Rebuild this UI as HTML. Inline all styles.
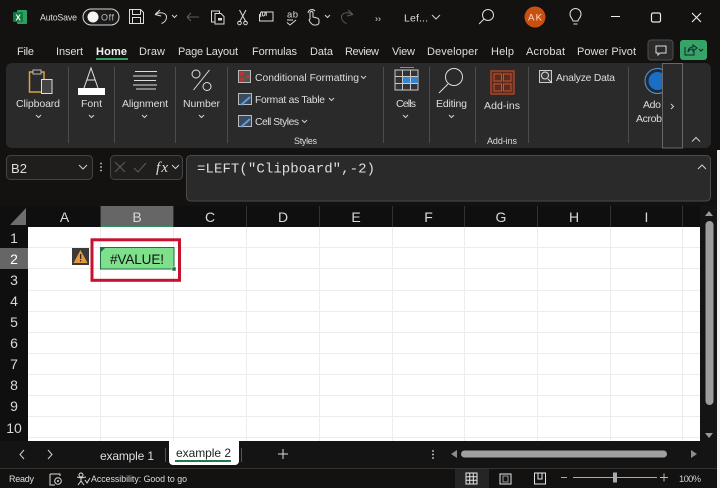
<!DOCTYPE html>
<html><head><meta charset="utf-8"><style>
html,body{margin:0;padding:0;background:#131211;width:720px;height:488px;overflow:hidden}
svg{display:block}
text{font-family:"Liberation Sans",sans-serif;fill:#dedede;font-size:10.500px}
.i{fill:none;stroke:#dcdcdc;stroke-width:1}
.c{fill:none;stroke:#d0d0d0;stroke-width:1}
.g{stroke:#e6e6e6;stroke-width:1;fill:none}
.t{font-size:11px}
.h{font-size:14px;fill:#d8d8d8}
.s{font-size:9.300px}
</style></head><body>
<svg width="720" height="488" viewBox="0 0 720 488" xmlns="http://www.w3.org/2000/svg">
<rect width="720" height="488" fill="#131211"/>

<!-- title bar -->
<rect x="17" y="10" width="10" height="14" rx="1" fill="#2f9e62"/>
<rect x="13" y="12" width="10" height="10" rx="1" fill="#107c41"/>
<text x="15.500" y="20.500" style="font-size:8px;font-weight:bold;fill:#fff">X</text>
<text x="40" y="20.500" textLength="37" style="font-size:8.800px">AutoSave</text>
<rect x="83" y="9" width="36" height="16" rx="8" fill="#1a1a1a" stroke="#d8d8d8"/>
<circle cx="93" cy="17" r="5.500" fill="#f4f4f4"/>
<text x="101" y="20.500" textLength="13" style="font-size:9px;fill:#bdbdbd">Off</text>
<g class="i">
<path d="M129.500 9.500h11l3 3v11h-14zM132.500 9.500v5h8v-5M132.500 23.500v-6h8v6"/>
<path d="M155 14.500l5-4.500M155 14.500l6 1.500M155.500 14.500c4-3 11-2 11 2.500 0 3-2 5.500-5 6.500"/>
</g>
<path class="c" d="M172 15l2.500 2.500 2.500-2.500"/>
<path d="M187 17h12M187 17l4-4M187 17l4 4" fill="none" stroke="#5e5e5e" stroke-width="1"/>
<g class="i">
<path d="M215 22h-3.500v-11h8v2.500M215 13.500h6l3 3v7.500h-9z"/><rect x="218" y="18" width="4" height="2.500" fill="#ddd" stroke="none"/>
<path d="M239.500 10l6.500 12M246 10l-6.500 12"/><circle cx="239.500" cy="23" r="1.800"/><circle cx="245.500" cy="23" r="1.800"/>
<path d="M262 12h11v9h-13.500v-7M261 17c-1.500-3 0-6 1-5s-.5 4 1.500 4 1-4 2-4 1 3 .5 4"/>
<path d="M287 22.500l3 2.500 6-5M287 20l6 0" stroke="#dcdcdc"/>
<path d="M310 19v-6a1.500 1.500 0 0 1 3 0v4l4 1c1 0 2 1 2 2v2c0 2-1 3-3 3h-2c-2 0-3-2-4-3l-1-2zM308 13a4 4 0 0 1 7-2"/>
</g>
<text x="287" y="17.500" textLength="11" style="font-size:9.500px">ab</text>
<path class="c" d="M325 15l2.500 2.500 2.500-2.500"/>
<path d="M353 14.500l-5-4.500M353 14.500l-6 1.500M352.500 14.500c-4-3-11-2-11 2.500 0 3 2 5.500 5 6.500" fill="none" stroke="#5a5a5a"/>
<text x="375" y="21.500" style="font-size:9px;fill:#ddd">››</text>
<text x="404" y="21.500" textLength="24" style="font-size:10.500px">Lef...</text>
<path class="c" d="M432 15l4 4 4-4"/>
<circle cx="488" cy="15" r="5.500" class="i"/><path class="i" d="M484 19l-5 5"/>
<circle cx="535" cy="17" r="10.500" fill="#ca5010"/>
<text x="528" y="20.500" textLength="14" style="font-size:9.500px;fill:#f6e0d4">AK</text>
<path class="i" d="M573 21c0-2-3-3-3-7a5.500 5.500 0 0 1 11 0c0 4-3 5-3 7zM573.500 24h4"/>
<path d="M611 16.500h9" stroke="#eee" stroke-width="1"/>
<rect x="651.500" y="13" width="9" height="9" rx="1.500" fill="none" stroke="#e6e6e6" stroke-width="1.200"/>
<path d="M692 13l9 9M701 13l-9 9" stroke="#eee" stroke-width="1.100"/>

<!-- tabs -->
<text class="t" x="17" y="55" textLength="17">File</text>
<text class="t" x="56" y="55" textLength="27">Insert</text>
<text x="96" y="55" textLength="31" style="font-size:11px;font-weight:bold;fill:#f2f2f2">Home</text>
<text class="t" x="139" y="55" textLength="26">Draw</text>
<text class="t" x="178" y="55" textLength="60">Page Layout</text>
<text class="t" x="252" y="55" textLength="45">Formulas</text>
<text class="t" x="310" y="55" textLength="23">Data</text>
<text class="t" x="345" y="55" textLength="34">Review</text>
<text class="t" x="392" y="55" textLength="23">View</text>
<text class="t" x="427" y="55" textLength="51">Developer</text>
<text class="t" x="491" y="55" textLength="23">Help</text>
<text class="t" x="526" y="55" textLength="39">Acrobat</text>
<text class="t" x="577" y="55" textLength="59">Power Pivot</text>
<rect x="96" y="58" width="32" height="2" fill="#2f9e62"/>
<rect x="648" y="40" width="25" height="20" rx="3" fill="#2b2b2b" stroke="#4d4d4d"/>
<path class="i" d="M656 46h10v7h-6l-2 2v-2h-2z"/>
<rect x="680" y="40" width="27" height="20" rx="3" fill="#35a466"/>
<path d="M685 47v8h9v-4M688 52c0-3 2-5 5-5v-2l4 3-4 3v-2c-2 0-4 1-5 3z" fill="none" stroke="#123" stroke-width="1"/>
<path d="M699 49l2 2 2-2" fill="none" stroke="#123"/>

<!-- ribbon -->
<rect x="6" y="63" width="705" height="85" rx="6" fill="#2a2a2a"/>
<g stroke="#4c4c4c" stroke-width="1">
<path d="M68.500 67v76M114.500 67v76M175.500 67v76M227.500 67v76M383.500 67v76M429.500 67v76M475.500 67v76M528.500 67v76M628.500 67v76"/>
</g>
<!-- clipboard -->
<path d="M34 72h-4.500v20h12M44 79v-7h-3" fill="none" stroke="#d9a441" stroke-width="1.500"/>
<rect x="33" y="70" width="8" height="4" fill="#2a2a2a" stroke="#bbb"/>
<rect x="41.500" y="79.500" width="10.500" height="14" fill="#444" stroke="#ddd"/>
<text x="16" y="107" textLength="44">Clipboard</text>
<path class="c" d="M36 115l2.500 2.500 2.500-2.500"/>
<!-- font -->
<path d="M84 88l7-20 7 20M86.500 80h9" fill="none" stroke="#e6e6e6"/>
<rect x="78" y="88" width="27" height="7" fill="#fff"/>
<text x="81" y="107" textLength="21">Font</text>
<path class="c" d="M89 115l2.500 2.500 2.500-2.500"/>
<!-- alignment -->
<path d="M135 71.500h22M133 76h24M134 80.500h22M133 85h24M136 89h20" stroke="#ddd"/>
<text x="122" y="107" textLength="46">Alignment</text>
<path class="c" d="M142 115l2.500 2.500 2.500-2.500"/>
<!-- number -->
<path d="M209.500 70l-16 20" stroke="#e0e0e0" fill="none"/>
<circle cx="196" cy="74" r="4" fill="none" stroke="#e0e0e0"/>
<circle cx="207" cy="86.500" r="4" fill="none" stroke="#e0e0e0"/>
<text x="183" y="107" textLength="37">Number</text>
<path class="c" d="M199 115l2.500 2.500 2.500-2.500"/>
<!-- styles -->
<rect x="238.500" y="70.500" width="12" height="12" fill="#555" stroke="#bbb"/>
<rect x="240" y="72" width="4" height="3" fill="#c43030"/><rect x="246" y="75" width="4" height="3" fill="#c43030"/><rect x="240" y="78" width="4" height="3" fill="#c43030"/>
<text x="255" y="81" textLength="104" style="font-size:10.300px">Conditional Formatting</text>
<path class="c" d="M361 76l2.500 2.500 2.500-2.500"/>
<rect x="238.500" y="93.500" width="13" height="11" fill="#3b4a5c" stroke="#bbb"/>
<path d="M241 105l9-8" stroke="#5aa0e0" stroke-width="2"/>
<text x="255" y="103" textLength="70" style="font-size:10.300px">Format as Table</text>
<path class="c" d="M329 98l2.500 2.500 2.500-2.500"/>
<rect x="238.500" y="115.500" width="13" height="11" fill="#3b4a5c" stroke="#bbb"/>
<path d="M241 127l9-8" stroke="#5aa0e0" stroke-width="2"/>
<text x="255" y="125" textLength="44" style="font-size:10.300px">Cell Styles</text>
<path class="c" d="M302 120l2.500 2.500 2.500-2.500"/>
<text x="294" y="144" textLength="23" style="font-size:9px">Styles</text>
<!-- cells -->
<rect x="395" y="70" width="23" height="20" fill="#333" stroke="#c8c8c8"/>
<rect x="402" y="77" width="16" height="7" fill="#2f86d6"/>
<path d="M395 76.500h23M395 83.500h23M402.500 70v20M410.500 70v20" stroke="#c8c8c8" stroke-width="1" fill="none"/>
<path d="M400 67.500h14" stroke="#4a9be0"/>
<text x="396" y="107" textLength="20">Cells</text>
<path class="c" d="M403 115l2.500 2.500 2.500-2.500"/>
<!-- editing -->
<circle cx="454" cy="77" r="8.500" class="i"/>
<path class="i" d="M448 84l-9 9"/>
<text x="436" y="107" textLength="31">Editing</text>
<path class="c" d="M449 115l2.500 2.500 2.500-2.500"/>
<!-- addins -->
<rect x="491" y="71" width="23" height="23" fill="#5c2b1c" stroke="#a8452a" stroke-width="1.500"/>
<rect x="494" y="74" width="7.500" height="7" fill="none" stroke="#c2553a"/><rect x="503.500" y="74" width="7.500" height="7" fill="none" stroke="#c2553a"/>
<rect x="494" y="84" width="7.500" height="7" fill="none" stroke="#c2553a"/><rect x="503.500" y="84" width="7.500" height="7" fill="none" stroke="#c2553a"/>
<text x="484" y="109" textLength="36">Add-ins</text>
<text x="487" y="144" textLength="30" style="font-size:9px">Add-ins</text>
<!-- analyze -->
<rect x="539.500" y="70.500" width="12" height="12" fill="#3a3a3a" stroke="#ccc"/>
<circle cx="545" cy="75.500" r="3.500" fill="none" stroke="#ddd"/><path d="M548 79l4 4" stroke="#ddd"/>
<text x="556" y="81" textLength="59" style="font-size:10.300px">Analyze Data</text>
<!-- adobe -->
<circle cx="657.500" cy="81" r="12.500" fill="none" stroke="#4a9be0"/>
<circle cx="657.500" cy="81" r="9.500" fill="#1b6ec2" stroke="#0b2f55"/>
<rect x="662" y="63" width="20" height="85" fill="#2a2a2a"/>
<text x="643" y="108" textLength="18">Ado</text>
<text x="636" y="122" textLength="26">Acrob</text>
<rect x="662.500" y="63.500" width="20" height="84.500" fill="#2a2a2a" stroke="#686868"/>
<path class="c" d="M671 104l2.500 2.500-2.500 2.500"/>
<path class="c" d="M692 141.500l4-4 4 4" stroke-width="1.100"/>

<!-- formula bar -->
<rect x="6.500" y="155.500" width="86" height="24" rx="4" fill="#1f1e1d" stroke="#444"/>
<text x="11" y="173" textLength="16" style="font-size:13px">B2</text>
<path class="c" d="M79 165l4 4 4-4"/>
<circle cx="101" cy="163.500" r=".9" fill="#ccc"/><circle cx="101" cy="167" r=".9" fill="#ccc"/><circle cx="101" cy="170.500" r=".9" fill="#ccc"/>
<rect x="110.500" y="155.500" width="72" height="24" rx="4" fill="#1f1e1d" stroke="#444"/>
<path d="M115 162l10 10M125 162l-10 10M134 168l4 4 8-9" fill="none" stroke="#5c5c5c"/>
<text x="156" y="172" textLength="12" style="font-family:'Liberation Serif',serif;font-style:italic;font-size:15px;fill:#ddd">fx</text>
<path class="c" d="M172 165l3.500 3.500 3.500-3.500"/>
<rect x="186.500" y="155.500" width="524" height="45.500" rx="4" fill="#2a2a2a" stroke="#4b4b4b"/>
<text x="197" y="172.500" textLength="178" style="font-family:'Liberation Mono',monospace;font-size:14px">=LEFT("Clipboard",-2)</text>
<path class="c" d="M698 169l4-4 4 4"/>

<!-- grid -->
<rect x="0" y="206" width="700" height="21" fill="#0f0f0f"/>
<rect x="0" y="227" width="28" height="214" fill="#0f0f0f"/>
<rect x="28" y="227" width="672" height="214" fill="#fff"/>
<path d="M10 225l16-17v17z" fill="#6e6e6e"/>
<rect x="100.500" y="206" width="73" height="21" fill="#666"/>
<rect x="100.500" y="226" width="73" height="1" fill="#2f8f5c"/>
<rect x="0" y="248" width="28" height="21" fill="#666"/>
<rect x="27" y="248" width="1" height="21" fill="#2f8f5c"/>
<g stroke="#333"><path d="M100.500 206v21M173.500 206v21M246.500 206v21M319.500 206v21M392.500 206v21M464.500 206v21M537.500 206v21M610.500 206v21M682.500 206v21"/></g>
<g stroke="#ececec" stroke-width="1">
<path d="M100.500 227v214M173.500 227v214M246.500 227v214M319.500 227v214M392.500 227v214M464.500 227v214M537.500 227v214M610.500 227v214M682.500 227v214"/>
<path d="M28 247.500h672M28 268.500h672M28 290.500h672M28 311.500h672M28 332.500h672M28 353.500h672M28 374.500h672M28 395.500h672M28 416.500h672M28 437.500h672"/>
</g>
<g text-anchor="middle">
<text class="h" x="64.500" y="222">A</text>
<text class="h" x="137" y="222">B</text>
<text class="h" x="210" y="222">C</text>
<text class="h" x="283" y="222">D</text>
<text class="h" x="356" y="222">E</text>
<text class="h" x="428.500" y="222">F</text>
<text class="h" x="501" y="222">G</text>
<text class="h" x="574" y="222">H</text>
<text class="h" x="646.500" y="222">I</text>
<text class="h" x="14" y="243">1</text>
<text class="h" x="14" y="264" style="fill:#fff">2</text>
<text class="h" x="14" y="285">3</text>
<text class="h" x="14" y="306">4</text>
<text class="h" x="14" y="327">5</text>
<text class="h" x="14" y="348">6</text>
<text class="h" x="14" y="369">7</text>
<text class="h" x="14" y="390">8</text>
<text class="h" x="14" y="411">9</text>
<text class="h" x="14" y="433">10</text>
</g>
<!-- selection -->
<rect x="100.500" y="247.500" width="73.500" height="21.500" fill="#7fe08c" stroke="#1f6b45" stroke-width="1"/>
<path d="M101 248h4l-4 4z" fill="#1f6b45"/>
<rect x="172" y="267" width="4" height="4" fill="#1f6b45" stroke="#fff" stroke-width=".5"/>
<text x="137" y="264" text-anchor="middle" textLength="54" style="font-size:13.500px;fill:#111">#VALUE!</text>
<rect x="92" y="239.800" width="87.500" height="40.500" fill="none" stroke="#c4122f" stroke-width="3"/>
<rect x="72" y="248" width="17" height="17" fill="#3a3a3a"/>
<path d="M80.500 250l7 13h-14z" fill="#e39a3b"/>
<rect x="80" y="254" width="1.300" height="5" fill="#3a2a10"/><rect x="80" y="260" width="1.300" height="1.500" fill="#3a2a10"/>

<!-- right scrollbar -->
<rect x="700" y="206" width="17" height="235" fill="#141414"/>
<path d="M705 216l4-5 4 5z" fill="#9a9a9a"/>
<rect x="705.500" y="221" width="8" height="184" rx="4" fill="#9c9c9c"/>
<path d="M705 433h8l-4 5z" fill="#9a9a9a"/>
<rect x="717" y="150" width="3" height="338" fill="#f2f2f2"/>

<!-- sheet tabs -->
<rect x="0" y="441" width="717" height="27" fill="#141414"/>
<path class="c" d="M24 450l-4 4.500 4 4.500M48 450l4 4.500-4 4.500" stroke="#9a9a9a"/>
<text x="100" y="460" textLength="54" style="font-size:12px">example 1</text>
<path d="M165.500 448v14M241.500 448v14" stroke="#555"/>
<path d="M169 441h70v20a4 4 0 0 1-4 4h-62a4 4 0 0 1-4-4z" fill="#fff"/>
<text x="176" y="457" textLength="55" style="font-size:12px;fill:#222">example 2</text>
<rect x="175" y="460" width="56" height="2" fill="#1f7a4c"/>
<path d="M278 454h10M283 449v10" stroke="#ddd"/>
<circle cx="433" cy="451" r=".9" fill="#ddd"/><circle cx="433" cy="454.500" r=".9" fill="#ddd"/><circle cx="433" cy="458" r=".9" fill="#ddd"/>
<path d="M451 454l6-4v8z" fill="#8c8c8c"/>
<rect x="461" y="450.500" width="206" height="7" rx="3.500" fill="#a0a0a0"/>
<path d="M691 450v8l6-4z" fill="#8c8c8c"/>
<rect x="0" y="468" width="717" height="1" fill="#333"/>

<!-- status -->
<text x="9" y="482" textLength="25" style="font-size:9px">Ready</text>
<path d="M50 474h10v2M50 474v11h5" class="i"/>
<circle cx="58" cy="481" r="3.300" class="i"/><circle cx="58" cy="481" r="1" fill="#ddd"/>
<path d="M79 475a2 2 0 1 1 4 0c0 1-1 2-2 2s-2-1-2-2zM77 477l4 1 5-1M81 478v3l-3 4M81 481l3 4M85 480l2 3 3-5" class="i"/>
<text x="91" y="482" textLength="96" style="font-size:8.800px">Accessibility: Good to go</text>
<rect x="455" y="469" width="34" height="19" fill="#252525"/>
<g class="g"><rect x="466" y="473" width="11" height="11"/><path d="M469.700 473v11M473.300 473v11M466 476.700h11M466 480.300h11"/></g>
<g class="g"><rect x="500" y="474" width="11" height="10"/><rect x="503" y="476" width="5" height="6" stroke="#999"/></g>
<g class="g"><path d="M534.500 473h11v11h-11zM538 473v6h4v-6"/></g>
<path d="M561 477.500h6M573 477.500h84" stroke="#aaa"/>
<rect x="613" y="472.500" width="4" height="10" fill="#aaa"/>
<path d="M660 477.500h8M664 473.500v8" stroke="#bbb"/>
<text x="679" y="482" textLength="22" style="font-size:9.300px;fill:#ccc">100%</text>
</svg>
</body></html>
